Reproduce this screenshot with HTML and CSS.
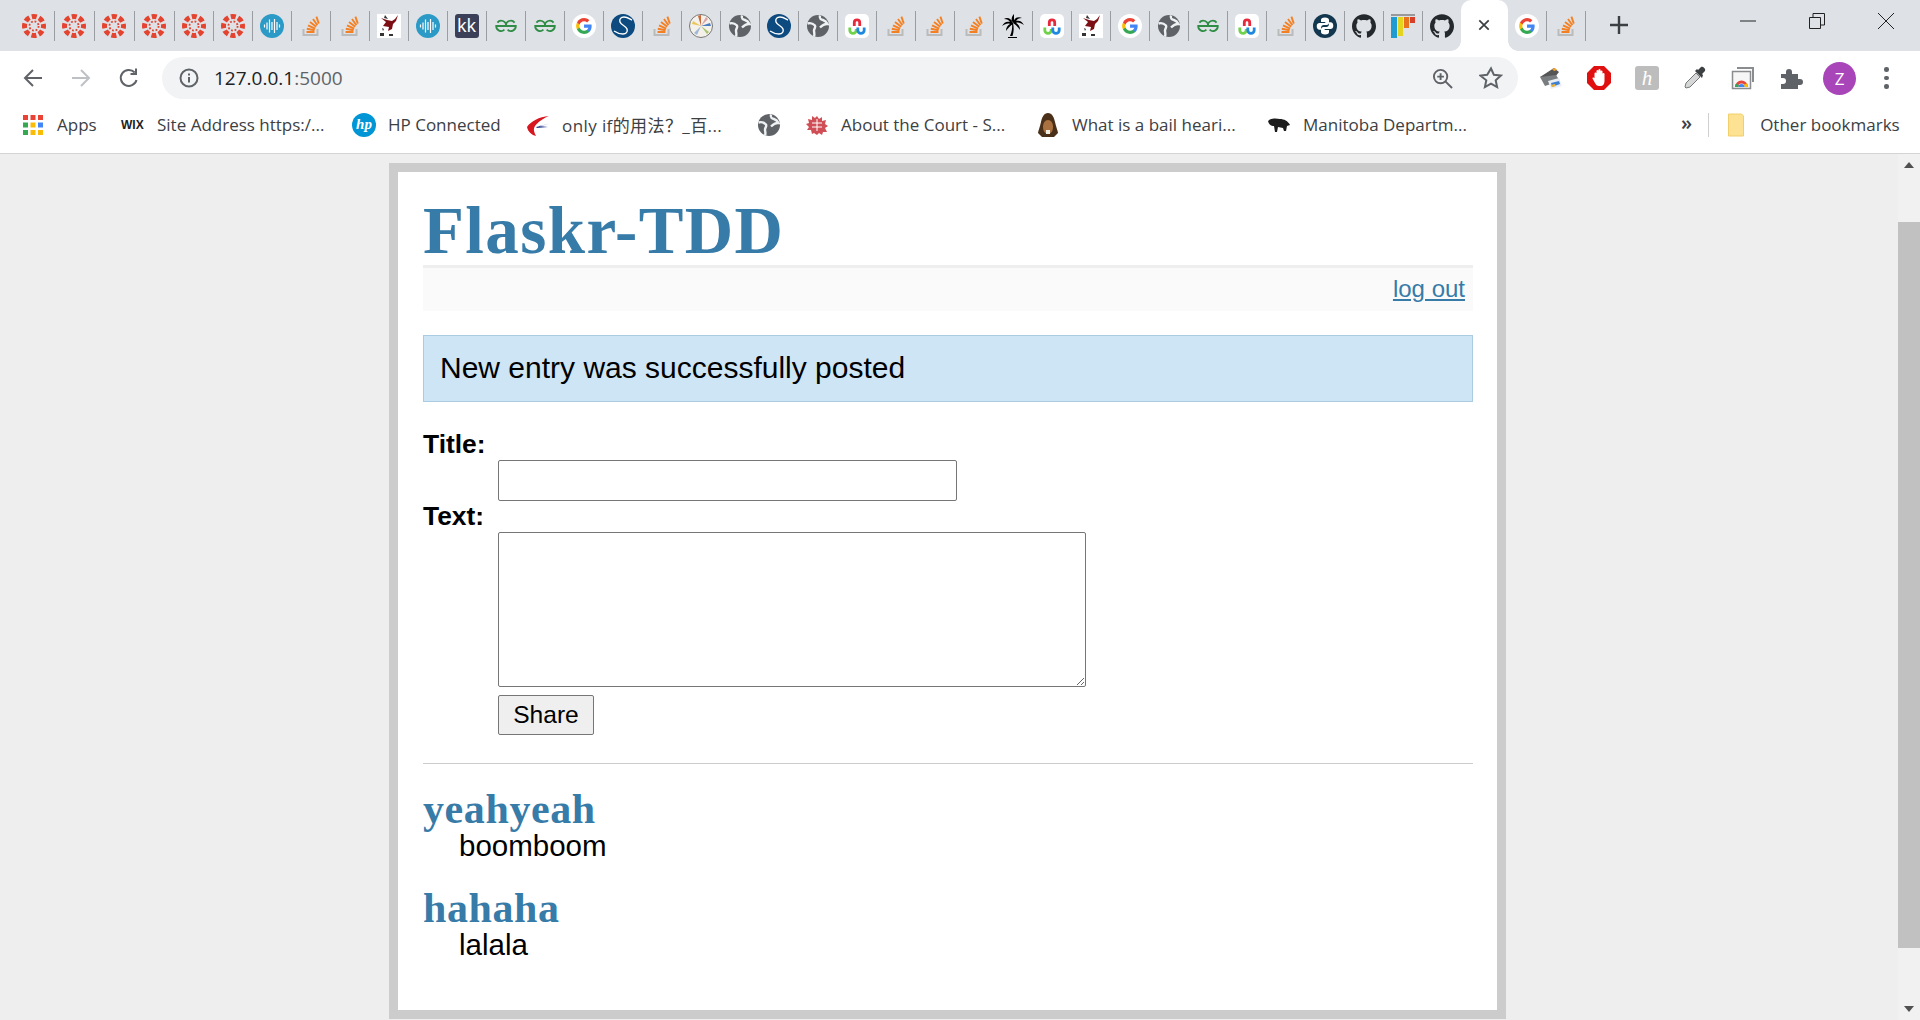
FILE: index.html
```html
<!DOCTYPE html>
<html lang="en">
<head>
    <meta charset="UTF-8">
    <title>Flaskr-TDD</title>
    <link rel="stylesheet" href="styles.css">
</head>
<body>
    <!-- favicons, reused by the tab strip -->
    <svg class="defs" aria-hidden="true">
        <symbol id="i-canvas" viewBox="0 0 24 24">
            <circle cx="12" cy="12" r="9.5" fill="none" stroke="#e4432f" stroke-width="5" stroke-dasharray="5 2.46" stroke-dashoffset="2.5"/>
            <circle cx="12" cy="12" r="4.6" fill="none" stroke="#e4432f" stroke-width="1.8" stroke-dasharray="1.8 1.81"/>
        </symbol>
        <symbol id="i-audio" viewBox="0 0 24 24">
            <circle cx="12" cy="12" r="12" fill="#2b9ac6"/>
            <path d="M4.5 10.5v3M7 8.5v7M9.5 5.5v13M12 8v8M14.5 5v14M17 8v8M19.5 10.5v3" stroke="#fff" stroke-width="1.2" fill="none"/>
        </symbol>
        <symbol id="i-so" viewBox="0 0 24 24">
            <path d="M4.5 15v6h14v-6" fill="none" stroke="#bcbbbb" stroke-width="2"/>
            <path d="M7.5 18h8M7.8 14.8l7.8 1.4M9 11.4l7.2 3.2M11 8l6.2 4.8M14 5l4.4 6.2M17.4 2.6l2.4 7" fill="none" stroke="#f48024" stroke-width="1.9"/>
        </symbol>
        <symbol id="i-eagle" viewBox="0 0 24 24">
            <rect width="24" height="24" fill="#fff"/>
            <path d="M21 1l-2 6-3 3-1 5-4 2 1-4-6-1 3-4-5-4 6 2 5 1 3-2z" fill="#7d0f14"/>
            <path d="M8 1l3 4-4-1zM5 14l2 1-1 2zM3 19h4v3H3zM12 20h4v2h-4z" fill="#333"/>
        </symbol>
        <symbol id="i-gfg" viewBox="0 0 24 24">
            <g fill="none" stroke="#2f8d46" stroke-width="1.8">
                <path d="M3.4 8.6A4.8 4.8 0 0 1 12 12H2.2A4.8 4.8 0 0 0 10.4 15.6"/>
                <path d="M20.6 8.6A4.8 4.8 0 0 0 12 12H21.8A4.8 4.8 0 0 1 13.6 15.6"/>
            </g>
        </symbol>
        <symbol id="i-google" viewBox="0 0 24 24">
            <circle cx="12" cy="12" r="12" fill="#fff"/>
            <g transform="translate(3.4 3.4) scale(.72)">
                <path fill="#4285f4" d="M22.56 12.25c0-.78-.07-1.53-.2-2.25H12v4.26h5.92c-.26 1.37-1.04 2.53-2.21 3.31v2.77h3.57c2.08-1.92 3.28-4.74 3.28-8.09z"/>
                <path fill="#34a853" d="M12 23c2.97 0 5.46-.98 7.28-2.66l-3.57-2.77c-.98.66-2.23 1.06-3.71 1.06-2.86 0-5.29-1.93-6.16-4.53H2.18v2.84C3.99 20.53 7.7 23 12 23z"/>
                <path fill="#fbbc05" d="M5.84 14.09c-.22-.66-.35-1.36-.35-2.09s.13-1.43.35-2.09V7.07H2.18C1.43 8.55 1 10.22 1 12s.43 3.45 1.18 4.93l3.66-2.84z"/>
                <path fill="#ea4335" d="M12 5.38c1.62 0 3.06.56 4.21 1.64l3.15-3.15C17.45 2.09 14.97 1 12 1 7.7 1 3.99 3.47 2.18 7.07l3.66 2.84c.87-2.6 3.3-4.53 6.16-4.53z"/>
            </g>
        </symbol>
        <symbol id="i-scipy" viewBox="0 0 24 24">
            <circle cx="12" cy="12" r="12" fill="#0c4a80"/>
            <path d="M21 6c-2-1-5-3-8-3S8 5 9 8s6 4 7 7-1 5-4 5-6-1-9-3" fill="none" stroke="#fff" stroke-width="1.4"/>
        </symbol>
        <symbol id="i-wheel" viewBox="0 0 24 24">
            <circle cx="12" cy="12" r="11.5" fill="#f4f1ea" stroke="#777"/>
            <path d="M12 12L9 2l3-1z" fill="#c96a3a"/>
            <path d="M12 12L3 10l1-3z" fill="#e8c75a"/>
            <path d="M12 12l8 6-2 2z" fill="#a6c46c"/>
            <path d="M12 12l-4 9-3-2z" fill="#9fb9d8"/>
            <path d="M12 12l9-3 1 3z" fill="#4a7ec0"/>
            <path d="M12 12l5-9 2 2z" fill="#d9a3a3"/>
        </symbol>
        <symbol id="i-globe" viewBox="0 0 24 24">
            <circle cx="12" cy="12" r="11" fill="#5f6368"/>
            <g fill="none" stroke="#eef0f2" stroke-width="2.400">
                <path d="M14 1.500c-1 3 1 4 3 4.500 1.500.5 3.500 2 4.500 4-3-.5-5.500 1.500-7.500 3.500"/>
                <path d="M1.500 9.500c3-1 5.500 0 7.500 2 1 2-1 3-1 5s1 4 0 6"/>
            </g>
        </symbol>
        <symbol id="i-uc" viewBox="0 0 24 24">
            <rect width="24" height="24" rx="5" fill="#fff"/>
            <g fill="none" stroke-width="2.800">
                <path d="M9.300 12V8.500a2.700 2.700 0 0 1 5.400 0V12" stroke="#e8293c"/>
                <path d="M4.800 13.500v2.700a3.200 3.200 0 0 0 6.400 0v-1.200" stroke="#6fd24a"/>
                <path d="M12.800 13.500v2.700a3.200 3.200 0 0 0 6.400 0v-2.700" stroke="#1e87e0"/>
            </g>
        </symbol>
        <symbol id="i-palm" viewBox="0 0 24 24">
            <path d="M12 9c1 4 1 9-.5 13H9c2-4 2.500-9 2-13z" fill="#000"/>
            <path d="M7 23h9v1H7zM12 9C10 4 6 3 3 5c3 0 5 1 6 3-3-1-6 0-8 4 3-2 6-3 8-2-2 1-4 3-4 7 2-3 4-5 7-7zM12 9c1-5 5-7 9-5-3 0-5 1-6 3 3-1 6 0 8 4-3-2-6-3-8-2 2 1 4 3 4 7-2-3-4-5-7-7zM11 8c-1-3 0-6 2-8 0 3 0 5 0 8z" fill="#000"/>
        </symbol>
        <symbol id="i-python" viewBox="0 0 24 24">
            <circle cx="12" cy="12" r="12" fill="#13374f"/>
            <path id="snake" d="M12 3.500c-3 0-4 1-4 2.500v2h4.300v1H6.500C5 9 3.700 10 3.700 12.300s1.300 3.400 2.600 3.400H8v-2c0-1.500 1.200-2.700 2.700-2.700h3c1.200 0 2.300-1 2.300-2.300V6c0-1.500-1.300-2.500-4-2.500z" fill="#fff"/>
            <use href="#snake" transform="rotate(180 12 12)"/>
        </symbol>
        <symbol id="i-github" viewBox="0 0 24 24">
            <path fill="#24292e" d="M12 .297c-6.63 0-12 5.373-12 12 0 5.303 3.438 9.8 8.205 11.385.6.113.82-.258.82-.577 0-.285-.01-1.04-.015-2.04-3.338.724-4.042-1.61-4.042-1.61C4.422 18.07 3.633 17.7 3.633 17.7c-1.087-.744.084-.729.084-.729 1.205.084 1.838 1.236 1.838 1.236 1.07 1.835 2.809 1.305 3.495.998.108-.776.417-1.305.76-1.605-2.665-.3-5.466-1.332-5.466-5.93 0-1.31.465-2.38 1.235-3.22-.135-.303-.54-1.523.105-3.176 0 0 1.005-.322 3.3 1.23.96-.267 1.98-.399 3-.405 1.02.006 2.04.138 3 .405 2.28-1.552 3.285-1.23 3.285-1.23.645 1.653.24 2.873.12 3.176.765.84 1.23 1.91 1.23 3.22 0 4.61-2.805 5.625-5.475 5.92.42.36.81 1.096.81 2.22 0 1.606-.015 2.896-.015 3.286 0 .315.21.69.825.57C20.565 22.092 24 17.592 24 12.297c0-6.627-5.373-12-12-12"/>
        </symbol>
        <symbol id="i-bars" viewBox="0 0 24 24">
            <rect y="0" width="24" height="2" fill="#999"/>
            <rect y="3" width="6" height="21" fill="#1f9bd1"/>
            <rect x="7" y="3" width="5" height="19" fill="#e4d41f"/>
            <rect x="13" y="3" width="5" height="11" fill="#e8731c"/>
            <rect x="19" y="3" width="5" height="6" fill="#d6402a"/>
        </symbol>
    </svg>

    <!-- tab strip -->
    <div class="tabstrip">
        <div class="tab tab-wide"><svg class="fav"><use href="#i-canvas"/></svg></div>
        <div class="tab tab-wide"><svg class="fav"><use href="#i-canvas"/></svg></div>
        <div class="tab tab-wide"><svg class="fav"><use href="#i-canvas"/></svg></div>
        <div class="tab tab-wide"><svg class="fav"><use href="#i-canvas"/></svg></div>
        <div class="tab"><svg class="fav"><use href="#i-canvas"/></svg></div>
        <div class="tab"><svg class="fav"><use href="#i-canvas"/></svg></div>
        <div class="tab"><svg class="fav"><use href="#i-audio"/></svg></div>
        <div class="tab"><svg class="fav"><use href="#i-so"/></svg></div>
        <div class="tab"><svg class="fav"><use href="#i-so"/></svg></div>
        <div class="tab"><svg class="fav"><use href="#i-eagle"/></svg></div>
        <div class="tab"><svg class="fav"><use href="#i-audio"/></svg></div>
        <div class="tab"><div class="fav-kk">kk</div></div>
        <div class="tab"><svg class="fav"><use href="#i-gfg"/></svg></div>
        <div class="tab"><svg class="fav"><use href="#i-gfg"/></svg></div>
        <div class="tab"><svg class="fav"><use href="#i-google"/></svg></div>
        <div class="tab"><svg class="fav"><use href="#i-scipy"/></svg></div>
        <div class="tab"><svg class="fav"><use href="#i-so"/></svg></div>
        <div class="tab"><svg class="fav"><use href="#i-wheel"/></svg></div>
        <div class="tab"><svg class="fav"><use href="#i-globe"/></svg></div>
        <div class="tab"><svg class="fav"><use href="#i-scipy"/></svg></div>
        <div class="tab"><svg class="fav"><use href="#i-globe"/></svg></div>
        <div class="tab"><svg class="fav"><use href="#i-uc"/></svg></div>
        <div class="tab"><svg class="fav"><use href="#i-so"/></svg></div>
        <div class="tab"><svg class="fav"><use href="#i-so"/></svg></div>
        <div class="tab"><svg class="fav"><use href="#i-so"/></svg></div>
        <div class="tab"><svg class="fav"><use href="#i-palm"/></svg></div>
        <div class="tab"><svg class="fav"><use href="#i-uc"/></svg></div>
        <div class="tab"><svg class="fav"><use href="#i-eagle"/></svg></div>
        <div class="tab"><svg class="fav"><use href="#i-google"/></svg></div>
        <div class="tab"><svg class="fav"><use href="#i-globe"/></svg></div>
        <div class="tab"><svg class="fav"><use href="#i-gfg"/></svg></div>
        <div class="tab"><svg class="fav"><use href="#i-uc"/></svg></div>
        <div class="tab"><svg class="fav"><use href="#i-so"/></svg></div>
        <div class="tab"><svg class="fav"><use href="#i-python"/></svg></div>
        <div class="tab"><svg class="fav"><use href="#i-github"/></svg></div>
        <div class="tab"><svg class="fav"><use href="#i-bars"/></svg></div>
        <div class="tab tab-plain"><svg class="fav"><use href="#i-github"/></svg></div>
        <div class="tab-active">
            <svg class="tab-close" viewBox="0 0 14 14"><path d="M1.500 1.500l11 11M12.500 1.500l-11 11"/></svg>
        </div>
        <div class="tab"><svg class="fav"><use href="#i-google"/></svg></div>
        <div class="tab"><svg class="fav"><use href="#i-so"/></svg></div>
        <svg class="new-tab" viewBox="0 0 18 18"><path d="M9 0v18M0 9h18"/></svg>
        <div class="window-controls">
            <svg class="win-min" viewBox="0 0 16 16"><path d="M0 8h16"/></svg>
            <svg class="win-restore" viewBox="0 0 16 16"><path d="M.5 4.500h11v11H.5zM4 4.500V.5h11.500V12h-4"/></svg>
            <svg class="win-close" viewBox="0 0 16 16"><path d="M0 0l16 16M16 0L0 16"/></svg>
        </div>
    </div>

    <!-- toolbar -->
    <div class="toolbar">
        <svg class="nav-icon" viewBox="0 0 24 24"><path d="M21 12H5M12 4l-8 8 8 8" stroke="#5f6368"/></svg>
        <svg class="nav-icon" viewBox="0 0 24 24"><path d="M3 12h16M12 4l8 8-8 8" stroke="#bdc1c6"/></svg>
        <svg class="nav-icon" viewBox="0 0 24 24"><path d="M19.500 14a8 8 0 1 1-1.800-7.500M19 2.500v5.500h-5.500" stroke="#5f6368"/></svg>
        <div class="omnibox">
            <svg class="info-icon" viewBox="0 0 20 20"><circle cx="10" cy="10" r="8.500"/><path d="M10 9v5.500M10 5.500v2"/></svg>
            <span class="url">127.0.0.1<span class="url-port">:5000</span></span>
            <svg class="zoom-icon" viewBox="0 0 22 22"><circle cx="9" cy="9" r="7"/><path d="M14 14l7 7M9 5.500v7M5.500 9h7"/></svg>
            <svg class="star-icon" viewBox="0 0 24 24"><path d="M12 2.500l2.900 6.300 6.900.8-5.100 4.700 1.400 6.800-6.100-3.400-6.100 3.400 1.400-6.800L1.300 9.600l6.900-.8z"/></svg>
        </div>
        <div class="extensions">
            <svg class="ext" viewBox="0 0 24 24">
                <path d="M1 11L15 2l5 4-4 5z" fill="#555"/>
                <path d="M1 11l16-2 4 6-15 5z" fill="#7a7d80"/>
                <path d="M9 15l11-3 3 8-11 3z" fill="#e9eef5"/>
                <path d="M12 17l8-2 1 3-8 3z" fill="#3f7fd0"/>
                <path d="M12 19l4-1 1 2-4 1z" fill="#f0b030"/>
                <path d="M13 3l3-1 2 2-3 1z" fill="#f0a030"/>
            </svg>
            <svg class="ext" viewBox="0 0 24 24">
                <path d="M7 0h10l7 7v10l-7 7H7l-7-7V7z" fill="#e01010"/>
                <path d="M7.500 13V7.500a1 1 0 0 1 2 0V5a1 1 0 0 1 2 0V4a1 1 0 0 1 2 0v1.500a1 1 0 0 1 2 0v2.500a1 1 0 0 1 2 0v7c0 3-1.500 5-4 5h-1.500c-2 0-3-1-4-3l-2.500-4.500c-.3-1 1.200-1.500 2-.5z" fill="#fff"/>
            </svg>
            <div class="ext-honey">h</div>
            <svg class="ext" viewBox="0 0 24 24">
                <path d="M3 22l-1-1 1-4L13 7l4 4L7 21z" fill="#d5d7d9" stroke="#777" stroke-width="1"/>
                <path d="M12 5l7 7 1-3-1-1 3-3c1-2-2-5-4-4l-3 3-1-1z" fill="#3c4043"/>
            </svg>
            <svg class="ext" viewBox="0 0 24 24">
                <path d="M6 1h17v15h-2V3H6z" fill="#8a8d90"/>
                <rect x="1.500" y="5.500" width="18" height="17" fill="#f6f6f6" stroke="#8a8d90" stroke-width="1.500"/>
                <path d="M4 21a6.500 6.500 0 0 1 13 0h-3a3.500 3.500 0 0 0-7 0z" fill="#e8453c"/>
                <path d="M4 21a6.500 6.500 0 0 1 1-3.500l3 2-.5 1.500z" fill="#34a853"/>
                <path d="M17 21a6.500 6.500 0 0 0-1-3.500l-3 1 .5 2.500z" fill="#fbbc05"/>
                <path d="M7.500 21a3 3 0 0 1 6 0z" fill="#4285f4"/>
            </svg>
            <svg class="ext" viewBox="0 0 24 24">
                <path d="M2 8h5V6a3 3 0 0 1 6 0v2h6v5h2a3 3 0 0 1 0 6h-2v4H2v-5h2a3 3 0 0 0 0-6H2z" fill="#5f6368"/>
            </svg>
            <div class="avatar">Z</div>
            <div class="menu-dots"><i></i><i></i><i></i></div>
        </div>
    </div>

    <!-- bookmarks bar -->
    <div class="bookmarks">
        <div class="bookmark">
            <svg class="bm-icon" viewBox="0 0 24 24">
                <path d="M2 2h5v5H2z" fill="#ea4335"/><path d="M9.500 2h5v5h-5z" fill="#ea4335"/><path d="M17 2h5v5h-5z" fill="#ea4335"/>
                <path d="M2 9.500h5v5H2z" fill="#34a853"/><path d="M9.500 9.500h5v5h-5z" fill="#fbbc05"/><path d="M17 9.500h5v5h-5z" fill="#4285f4"/>
                <path d="M2 17h5v5H2z" fill="#34a853"/><path d="M9.500 17h5v5h-5z" fill="#fbbc05"/><path d="M17 17h5v5h-5z" fill="#fbbc05"/>
            </svg>
            <span>Apps</span>
        </div>
        <div class="bookmark">
            <span class="wix">WIX</span>
            <span>Site Address https:/...</span>
        </div>
        <div class="bookmark">
            <div class="bm-hp">hp</div>
            <span>HP Connected</span>
        </div>
        <div class="bookmark">
            <svg class="bm-icon" viewBox="0 0 24 24">
                <path d="M23 3C13 4 5 8 1 14c1 5 5 8 9 9-2-4-3-7-1-10 3-4 9-8 14-10z" fill="#d7161f"/>
                <path d="M10 14l13-3-10 2 9 1-11 1z" fill="#2a3f8f"/>
            </svg>
            <span class="bm-cjk">only if的用法？_百...</span>
        </div>
        <div class="bookmark"><svg class="bm-icon"><use href="#i-globe"/></svg></div>
        <div class="bookmark">
            <svg class="bm-icon" viewBox="0 0 24 24">
                <path d="M12 3l2 3 3-2 0 4 4-1-1 4 3 2-3 2 2 4-4 0-1 3-3-2-2 2-3-2-2 1-1-4-4 0 2-3-3-3 3-1-1-4 4 1 0-4 3 2z" fill="#c8303a" opacity=".85"/>
                <path d="M7 10h10M7 14h10M12 6v12" stroke="#fff" stroke-width="1"/>
            </svg>
            <span>About the Court - S...</span>
        </div>
        <div class="bookmark">
            <svg class="bm-icon" viewBox="0 0 24 24">
                <path d="M12 0c4 0 6 4 7 9s3 9 3 11l-4 4H6l-4-4c0-2 2-6 3-11s3-9 7-9z" fill="#4a3018"/>
                <path d="M12 7c3 0 5 3 5 7s-2 7-5 7-5-3-5-7 2-7 5-7z" fill="#a9713f"/>
                <rect x="10" y="17" width="4" height="4" fill="#f1eee6"/>
            </svg>
            <span>What is a bail heari...</span>
        </div>
        <div class="bookmark">
            <svg class="bm-icon" viewBox="0 0 24 24">
                <path d="M1 8c3-3 8-3 12-2 4 0 8 2 10 6l-3 1-1 5h-2l-1-3-5-1-1 5H8l-1-6c-3 0-5-1-6-5z" fill="#1d1d1d"/>
            </svg>
            <span>Manitoba Departm...</span>
        </div>
        <div class="bookmarks-end">
            <span class="chevrons">»</span>
            <div class="bm-divider"></div>
            <svg class="bm-icon" viewBox="0 0 24 24">
                <path d="M3.500 1h13l2 2v20h-15z" fill="#fde293" stroke="#f2cf6a"/>
            </svg>
            <span>Other bookmarks</span>
        </div>
    </div>

    <div class="viewport">
        <main class="content">
            <div class="page">
                <h1>Flaskr-TDD</h1>
                <div class="metanav"><a href="#">log out</a></div>
                <div class="flash">New entry was successfully posted</div>
                <form class="add-entry">
                    <dl>
                        <dt>Title:</dt>
                        <dd><input type="text" class="field-title"></dd>
                        <dt>Text:</dt>
                        <dd><textarea class="field-text"></textarea></dd>
                        <dd><input type="submit" value="Share" class="share"></dd>
                    </dl>
                </form>
                <hr>
                <ul class="entries">
                    <li>
                        <h2>yeahyeah</h2>
                        <p>boomboom</p>
                    </li>
                    <li>
                        <h2>hahaha</h2>
                        <p>lalala</p>
                    </li>
                </ul>
            </div>
        </main>
        <div class="scrollbar">
            <div class="scroll-btn"><i class="arrow-up"></i></div>
            <div class="scroll-track"><div class="scroll-thumb"></div></div>
            <div class="scroll-btn"><i class="arrow-down"></i></div>
        </div>
    </div>
</body>
</html>
```

FILE: styles.css
```css
* {
    box-sizing: border-box;
}
html, body {
    height: 100%;
}
body {
    margin: 0;
    display: flex;
    flex-direction: column;
    overflow: hidden;
    background: #eee;
    font-family: "Liberation Sans", Arial, sans-serif;
}
.defs {
    width: 0;
    height: 0;
    position: absolute;
}

/* Tab strip */
.tabstrip {
    flex: 0 0 51px;
    display: flex;
    padding-left: 14.500px;
    background: #dee1e6;
}
.tab {
    flex: 0 0 39px;
    height: 30px;
    margin-top: 11px;
    display: flex;
    align-items: center;
    justify-content: center;
    border-right: 1.500px solid #9a9ea3;
}
.tab-wide {
    flex-basis: 40px;
}
.tab-plain {
    flex-basis: 38.500px;
    border-right: none;
}
.fav {
    width: 24px;
    height: 24px;
}
.fav-kk {
    width: 24px;
    height: 24px;
    background: #3b3f58;
    border-radius: 3px;
    color: #fff;
    font-family: "Noto Sans", sans-serif;
    font-size: 18px;
    line-height: 22px;
    text-align: center;
}
.tab-active {
    flex: 0 0 46.500px;
    position: relative;
    display: flex;
    align-items: center;
    justify-content: center;
    padding-bottom: 1px;
    background: #fff;
    border-radius: 10px 10px 0 0;
}
.tab-active::before,
.tab-active::after {
    content: '';
    position: absolute;
    bottom: 0;
    width: 10px;
    height: 10px;
}
.tab-active::before {
    left: -10px;
    background: radial-gradient(circle at 0 0, #dee1e6 9.500px, #fff 10px);
}
.tab-active::after {
    right: -10px;
    background: radial-gradient(circle at 100% 0, #dee1e6 9.500px, #fff 10px);
}
.tab-close {
    width: 12px;
    height: 12px;
    fill: none;
    stroke: #3c4043;
    stroke-width: 2;
}
.new-tab {
    width: 18px;
    height: 18px;
    margin: 16px 0 0 24px;
    fill: none;
    stroke: #3c4043;
    stroke-width: 2.400;
}
.window-controls {
    margin-left: auto;
    display: flex;
    align-items: flex-start;
    padding-top: 13px;
    padding-right: 26px;
    gap: 53px;
}
.window-controls svg {
    width: 16px;
    height: 16px;
    fill: none;
    stroke: #222;
    stroke-width: 1;
}

/* Toolbar */
.toolbar {
    flex: 0 0 54px;
    display: flex;
    align-items: center;
    padding-left: 21px;
    background: #fff;
}
.nav-icon {
    width: 24px;
    height: 24px;
    margin-right: 24px;
    fill: none;
    stroke-width: 2;
}
.nav-icon:nth-of-type(3) {
    margin-right: 21px;
}
.omnibox {
    width: 1356px;
    height: 42px;
    display: flex;
    align-items: center;
    padding: 0 15px 0 17px;
    background: #f1f3f4;
    border-radius: 21px;
}
.info-icon {
    width: 20px;
    height: 20px;
    fill: none;
    stroke: #5f6368;
    stroke-width: 2;
}
.url {
    margin-left: 15px;
    font-family: "Open Sans", sans-serif;
    font-size: 19px;
    color: #202124;
}
.url-port {
    color: #5f6368;
}
.zoom-icon {
    width: 21px;
    height: 21px;
    margin-left: auto;
    fill: none;
    stroke: #5f6368;
    stroke-width: 2;
}
.star-icon {
    width: 24px;
    height: 24px;
    margin-left: 26px;
    fill: none;
    stroke: #5f6368;
    stroke-width: 2;
}
.extensions {
    display: flex;
    align-items: center;
    padding-left: 21px;
}
.ext {
    width: 24px;
    height: 24px;
    margin-right: 24px;
}
.ext-honey {
    width: 24px;
    height: 24px;
    margin-right: 24px;
    background: #bdbdbd;
    border-radius: 3px;
    color: #fff;
    font-family: "Liberation Serif", serif;
    font-style: italic;
    font-size: 21px;
    line-height: 24px;
    text-align: center;
}
.avatar {
    width: 33px;
    height: 33px;
    margin-left: -4px;
    border-radius: 50%;
    background: #a845b8;
    color: #fff;
    font-family: "Open Sans", sans-serif;
    font-size: 17px;
    line-height: 33px;
    text-align: center;
}
.menu-dots {
    display: flex;
    flex-direction: column;
    gap: 4px;
    margin-left: 28px;
}
.menu-dots i {
    width: 4.500px;
    height: 4.500px;
    border-radius: 50%;
    background: #5f6368;
}

/* Bookmarks bar */
.bookmarks {
    flex: 0 0 49px;
    display: grid;
    grid-template-columns: 100px 231px 174px 231px 48px 231px 231px 414px 1fr;
    align-items: center;
    padding-left: 21px;
    padding-bottom: 9px;
    background: #fff;
    border-bottom: 1px solid #d4d4d4;
    font-family: "Open Sans", "Noto Sans CJK SC", sans-serif;
    font-size: 17px;
    color: #3c4043;
}
.bookmark {
    display: flex;
    align-items: center;
    gap: 12px;
    white-space: nowrap;
}
.bm-cjk {
    letter-spacing: .400px;
}
.bm-icon {
    flex: 0 0 24px;
    width: 24px;
    height: 24px;
}
.bm-hp {
    width: 24px;
    height: 24px;
    background: #0096d6;
    border-radius: 50%;
    color: #fff;
    font-family: "Liberation Serif", serif;
    font-size: 15px;
    font-style: italic;
    font-weight: bold;
    line-height: 23px;
    text-align: center;
}
.wix {
    width: 24px;
    font-family: "Liberation Sans", sans-serif;
    font-size: 12px;
    font-weight: bold;
    color: #222;
}
.bookmarks-end {
    display: flex;
    align-items: center;
    white-space: nowrap;
}
.bookmarks-end span:last-child {
    margin-left: 11px;
}
.chevrons {
    font-size: 20px;
    font-weight: 600;
    margin-bottom: 4px;
}
.bm-divider {
    width: 1px;
    height: 24px;
    margin: 0 16px;
    background: #d0d0d0;
}

/* Page area */
.viewport {
    flex: 1;
    display: flex;
    min-height: 0;
}
.content {
    flex: 1;
    padding: 9px 3px 0 0;
}
.page {
    width: 1117px;
    height: 856px;
    margin: 0 auto;
    padding: 0 24px 0 25px;
    border: 9px solid #ccc;
    background: #fff;
}
h1 {
    margin: 0;
    height: 96px;
    padding-top: 28px;
    border-bottom: 3px solid #eee;
    font-family: "Liberation Serif", Georgia, serif;
    font-size: 67px;
    line-height: 60px;
    letter-spacing: 1.400px;
    color: #377ba8;
}
.metanav {
    height: 43px;
    padding-right: 8px;
    background: #fafafa;
    text-align: right;
    font-size: 24px;
    line-height: 41px;
}
.metanav a {
    color: #377ba8;
}
.flash {
    height: 67px;
    margin-top: 24px;
    padding-left: 16px;
    background: #cee5f5;
    border: 1px solid #aacbe2;
    font-size: 30px;
    line-height: 63px;
    color: #000;
}
.add-entry dl {
    margin: 27px 0 0;
    font-size: 28.800px;
}
.add-entry dt {
    height: 31px;
    font-size: 26.400px;
    font-weight: bold;
    line-height: 31px;
}
.add-entry dd {
    margin: 0 0 0 75px;
}
.field-title {
    display: block;
    width: 459px;
    height: 41px;
    padding: 2px;
    background: #fff;
    border: 1px solid #767676;
    border-radius: 2px;
}
.field-text {
    display: block;
    width: 588px;
    height: 155px;
    background: #fff;
    border: 1px solid #767676;
    border-radius: 2px;
}
.share {
    display: block;
    width: 96px;
    height: 40px;
    margin-top: 8px;
    padding: 0;
    background: #efefef;
    border: 1px solid #767676;
    border-radius: 2px;
    font-family: "Liberation Sans", Arial, sans-serif;
    font-size: 24.600px;
    color: #000;
}
hr {
    height: 1px;
    margin: 28px 0 0;
    border: none;
    background: #ccc;
}
.entries {
    margin: 0;
    padding: 23px 0 0;
    list-style: none;
}
.entries li {
    margin-bottom: 25px;
}
.entries h2 {
    margin: 0;
    font-family: "Liberation Serif", Georgia, serif;
    font-size: 42px;
    line-height: 44px;
    letter-spacing: .600px;
    color: #377ba8;
}
.entries p {
    margin: 0 0 0 36px;
    font-size: 29.500px;
    line-height: 30px;
    color: #000;
}

/* Scrollbar */
.scrollbar {
    flex: 0 0 22px;
    display: flex;
    flex-direction: column;
    background: #f1f1f1;
}
.scroll-btn {
    flex: 0 0 22px;
    display: flex;
    align-items: center;
    justify-content: center;
}
.scroll-track {
    flex: 1;
    padding-top: 46px;
}
.scroll-thumb {
    height: 726px;
    background: #c1c1c1;
}
.arrow-up,
.arrow-down {
    width: 0;
    height: 0;
    border-left: 5.500px solid transparent;
    border-right: 5.500px solid transparent;
}
.arrow-up {
    border-bottom: 6px solid #505050;
}
.arrow-down {
    border-top: 6px solid #505050;
}
```
